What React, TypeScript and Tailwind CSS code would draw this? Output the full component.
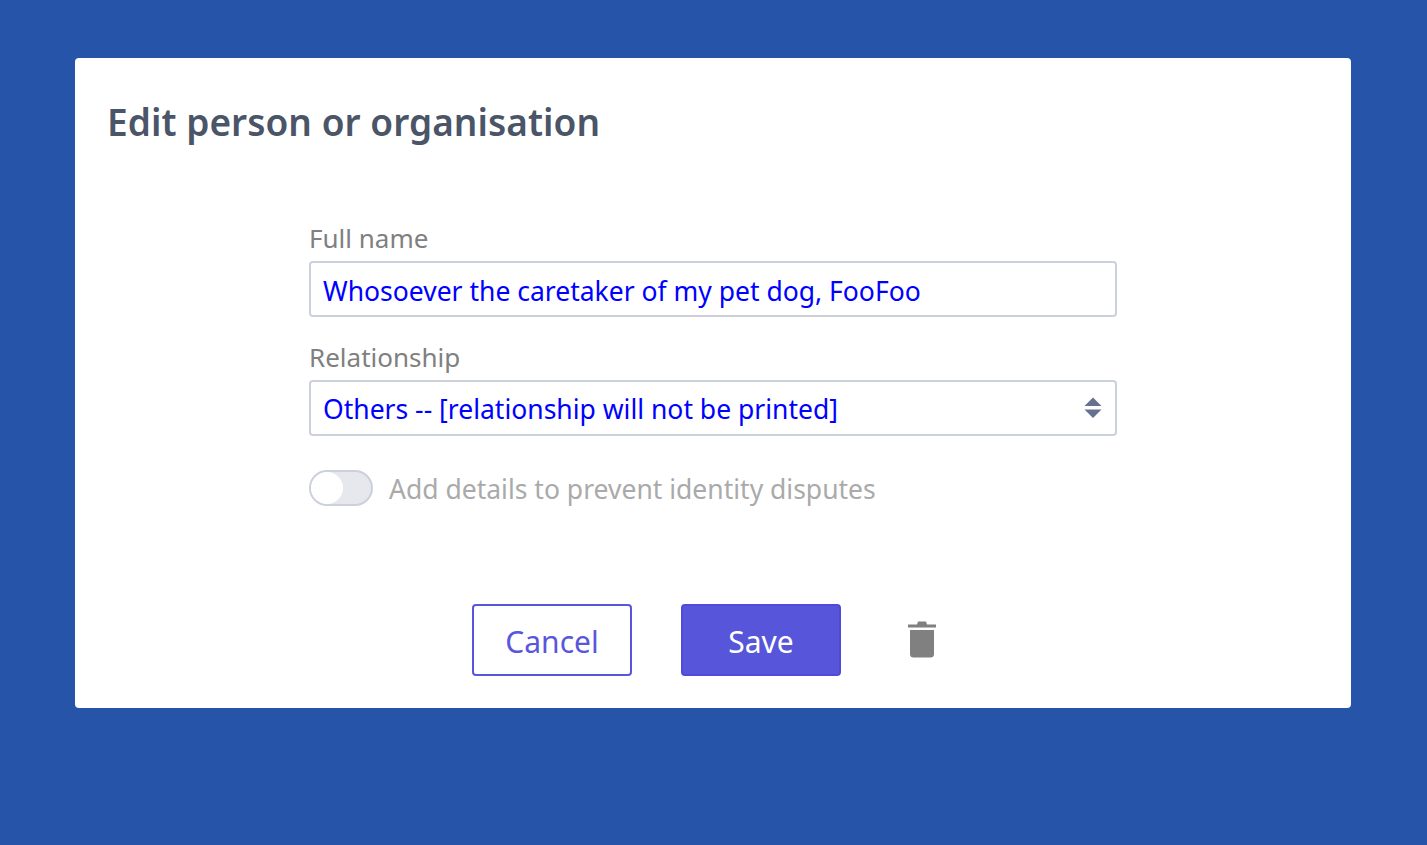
export default function App() {
  const font = { fontFamily: '"Noto Sans", sans-serif' };
  return (
    <div style={font} className="min-h-[845px] bg-[#2554a8] pt-[58px] pb-[137px] px-[75px] overflow-hidden">
      <div className="h-[650px] w-[1276px] bg-white rounded-[4px] pt-[37px] px-[33px]">
        <h1 className="text-[37px] leading-[54px] font-semibold text-[#4a5568] tracking-[0.05px] -ml-[1px]">Edit person or organisation</h1>
        <div className="w-[808px] mx-auto mt-[69px]">
          <label className="block text-[26px] leading-[36px] text-[#808080] h-[43px] pt-[2px]">Full name</label>
          <input
            readOnly
            value="Whosoever the caretaker of my pet dog, FooFoo"
            className="block w-full h-[56px] border-2 border-[#cbd0dc] rounded-[4px] px-[12px] pt-[4px] text-[26.5px] text-[#0000ff] outline-none bg-white"
          />
          <label className="block mt-[21px] pt-[1px] text-[26px] leading-[36px] text-[#808080] h-[42px]">Relationship</label>
          <div className="relative">
            <div className="w-full h-[56px] flex items-center border-2 border-[#cbd0dc] rounded-[4px] px-[12px] pt-[3px] text-[26.5px] text-[#0000ff] bg-white">
              Others -- [relationship will not be printed]
            </div>
            <svg className="absolute right-[15px] top-[17px]" width="18" height="22" viewBox="0 0 18 22">
              <path d="M9 0.5 L17.5 9 L0.5 9 Z" fill="#667190" />
              <path d="M0.5 12.5 L17.5 12.5 L9 21 Z" fill="#667190" />
            </svg>
          </div>
          <div className="flex items-center mt-[34px] h-[36px]">
            <div className="w-[64px] h-[36px] rounded-full border-2 border-[#cbd0dc] bg-[#e6e8ed] flex items-center shrink-0">
              <div className="w-[32px] h-[32px] rounded-full bg-white" />
            </div>
            <span className="ml-[16px] pt-[4px] text-[26.5px] text-[#aaaaaa]">Add details to prevent identity disputes</span>
          </div>
        </div>
        <div className="flex items-center mt-[98px] ml-[364px]">
          <button className="w-[160px] h-[72px] pt-[2px] border-2 border-[#5a56dc] rounded-[4px] bg-white text-[#5a56dc] text-[30px]">Cancel</button>
          <button className="w-[160px] h-[72px] pt-[2px] ml-[49px] border-2 border-[#4f4bd6] rounded-[4px] bg-[#5755d9] text-white text-[30px]">Save</button>
          <svg className="ml-[67px] -mt-[1px]" width="28" height="37" viewBox="0 0 28 37">
            <path d="M0 3.5 H9 L10 0.5 H18 L19 3.5 H28 V6.5 H0 Z" fill="#808080" />
            <path d="M2 9 H26 V33 Q26 36.5 22.5 36.5 H5.5 Q2 36.5 2 33 Z" fill="#808080" />
          </svg>
        </div>
      </div>
    </div>
  );
}
